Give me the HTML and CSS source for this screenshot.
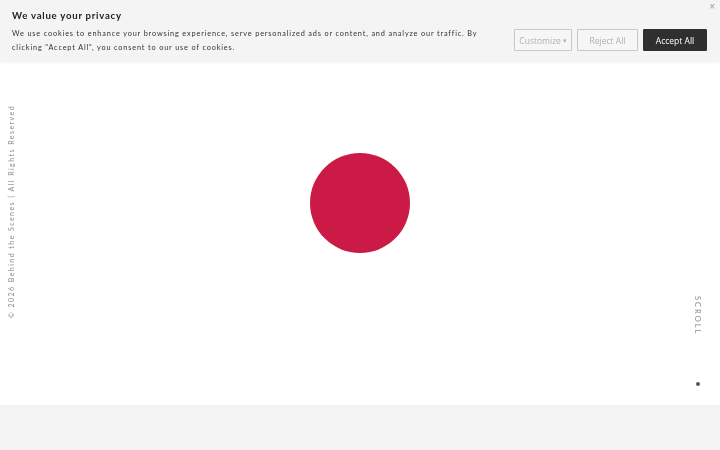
FILE: index.html
```html
<!DOCTYPE html>
<html lang="en">
<head>
<meta charset="utf-8">
<title>Behind the Scenes</title>
<link rel="stylesheet" href="styles.css">
</head>
<body>
<main class="hero">
  <div class="dot-circle"></div>
</main>
<section class="below"></section>

<div class="side-copy">© 2026 Behind the Scenes | All Rights Reserved</div>
<div class="scroll-hint">
  <span class="scroll-label">SCROLL</span>
  <span class="scroll-dot"></span>
</div>

<div class="cookie-banner">
  <div class="cookie-text">
    <h2 class="cookie-title">We value your privacy</h2>
    <p class="cookie-body">We use cookies to enhance your browsing experience, serve personalized ads or content, and analyze our traffic. By clicking "Accept All", you consent to our use of cookies.</p>
  </div>
  <div class="cookie-actions">
    <button class="btn btn-outline btn-custom">Customize <span class="caret">▾</span></button>
    <button class="btn btn-outline btn-reject">Reject All</button>
    <button class="btn btn-dark">Accept All</button>
  </div>
  <button class="cookie-close" aria-label="Close">×</button>
</div>
</body>
</html>
```
FILE: styles.css
```css
html, body {
  margin: 0;
  padding: 0;
}
body {
  background: #f3f3f3;
  font-family: "Lato", "Liberation Sans", sans-serif;
  overflow: hidden;
}
.hero {
  height: 405px;
  background: #ffffff;
  display: flex;
  align-items: center;
  justify-content: center;
}
.dot-circle {
  width: 100px;
  height: 100px;
  border-radius: 50%;
  background: #cc1a46;
}
.below {
  height: 45px;
  background: #f3f3f3;
}
.side-copy {
  position: fixed;
  left: 5px;
  top: 318px;
  transform-origin: 0 0;
  transform: rotate(-90deg);
  white-space: nowrap;
  font-size: 7px;
  letter-spacing: 1.45px;
  color: #8a8a8a;
  line-height: 12px;
}
.scroll-hint {
  position: fixed;
  right: 18px;
  top: 296px;
  display: flex;
  flex-direction: column;
  align-items: center;
  gap: 47px;
}
.scroll-label {
  writing-mode: vertical-rl;
  font-size: 7.5px;
  letter-spacing: 2px;
  color: #8a8a8a;
}
.scroll-dot {
  width: 4px;
  height: 4px;
  border-radius: 50%;
  background: #555;
}
.cookie-banner {
  position: fixed;
  top: 0;
  left: 0;
  right: 0;
  height: 62px;
  box-sizing: border-box;
  background: #f4f4f4;
  box-shadow: 0 1px 3px rgba(0,0,0,0.04);
  display: flex;
  align-items: flex-start;
  padding: 9px 13px 0 12px;
}
.cookie-text {
  width: 478px;
}
.cookie-title {
  margin: 0;
  font-size: 9.6px;
  font-weight: 700;
  letter-spacing: 0.75px;
  color: #222;
  line-height: 14px;
}
.cookie-body {
  margin: 4px 0 0;
  font-size: 7.3px;
  letter-spacing: 0.85px;
  line-height: 14px;
  color: #333;
}
.cookie-actions {
  margin-left: auto;
  margin-top: 20px;
  display: flex;
  gap: 5px;
}
.btn {
  height: 22px;
  box-sizing: border-box;
  font-family: "Open Sans", "DejaVu Sans", sans-serif;
  font-size: 8.5px;
  padding: 0;
  border-radius: 1px;
  white-space: nowrap;
  cursor: pointer;
}
.btn-outline {
  background: #f6f6f6;
  border: 1px solid #c8c8c8;
  color: #b0b0b0;
}
.btn-custom { width: 58px; }
.btn-reject { width: 61px; }
.btn-dark {
  width: 64px;
  background: #2f2f2f;
  border: 1px solid #2f2f2f;
  color: #fff;
}
.caret {
  font-size: 7px;
  vertical-align: 1px;
}
.cookie-close {
  position: absolute;
  top: 2px;
  right: 5px;
  border: none;
  background: none;
  color: #999;
  font-size: 10px;
  padding: 0;
  line-height: 10px;
  cursor: pointer;
}
```
